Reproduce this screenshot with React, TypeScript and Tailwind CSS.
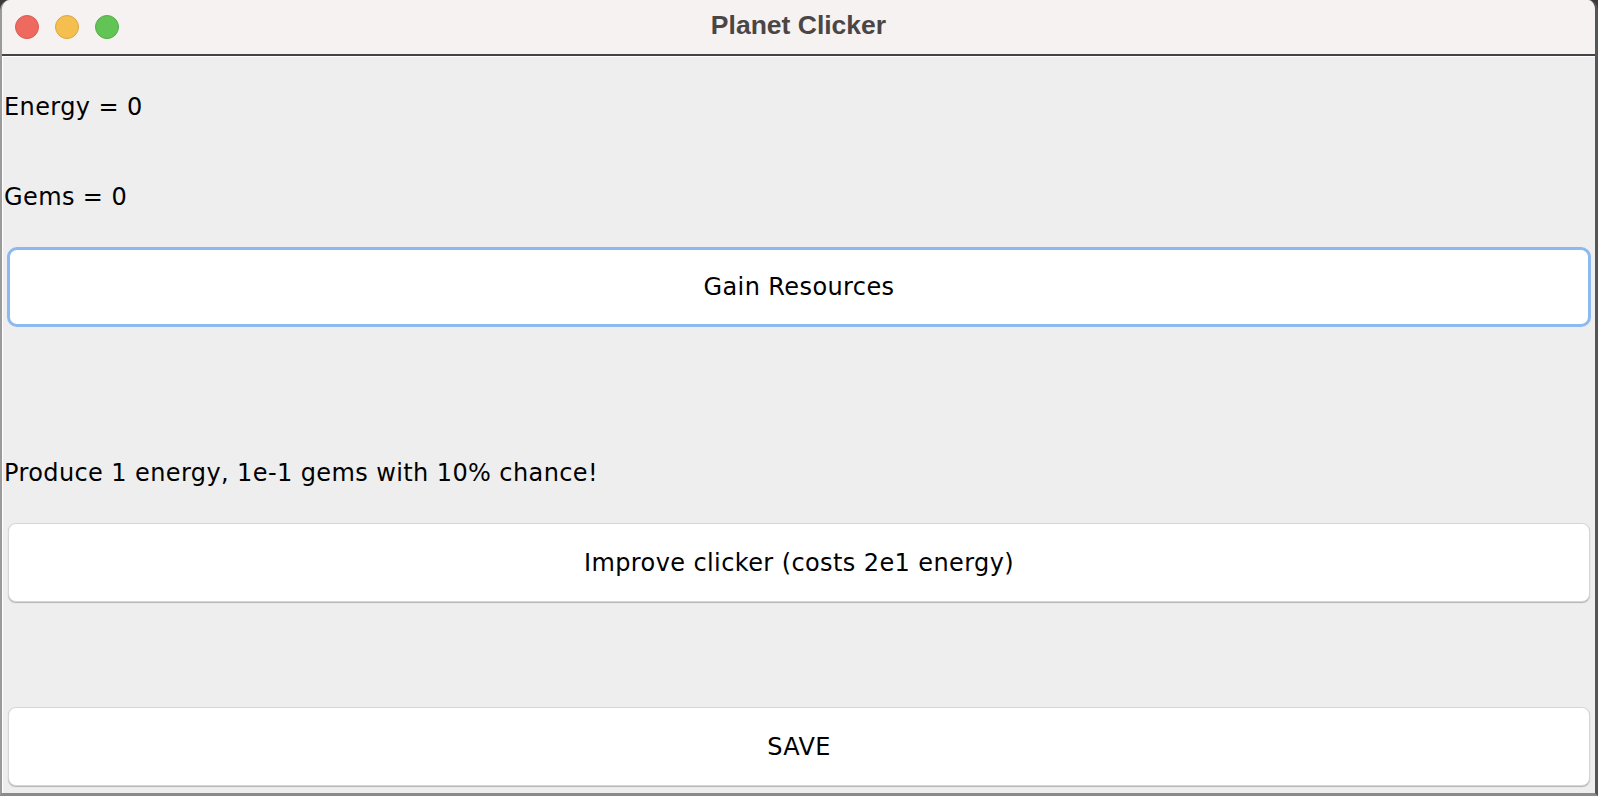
export default function App() {
  const body = "font-['DejaVu_Sans',sans-serif] text-[24px] tracking-[0.4px] leading-[30px] text-black";

  return (
    <div className="w-[1598px] h-[796px] bg-[#3a3a3a] overflow-hidden">
      <div className="flex flex-col h-full rounded-t-[10px] overflow-hidden border-l-2 border-l-[#9a9a9a] border-r-[3px] border-r-[#555] border-b-[3px] border-b-[#8a8a8a] bg-[#eeeeee]">
        {/* Title bar */}
        <div className="grid grid-cols-[1fr_auto_1fr] items-center h-[56px] shrink-0 bg-[#f7f2f2] border-b-2 border-[#444]">
          <div className="flex items-center gap-[16px] pl-[13px]">
            <span className="w-[24px] h-[24px] rounded-full bg-[#ee6a5f] border border-[#d85b51]" />
            <span className="w-[24px] h-[24px] rounded-full bg-[#f5bf4f] border border-[#dca63f]" />
            <span className="w-[24px] h-[24px] rounded-full bg-[#61c454] border border-[#52ad46]" />
          </div>
          <div className="font-['Liberation_Sans',sans-serif] font-bold text-[26.5px] text-[#4b4646] pb-[2px]">
            Planet Clicker
          </div>
          <div />
        </div>

        {/* Content */}
        <div className="flex flex-col flex-1 border-t border-white border-l border-l-white">
          <div className={`${body} mt-[35px] pl-[1px]`}>Energy = 0</div>
          <div className={`${body} mt-[60px] pl-[1px]`}>Gems = 0</div>

          <button className={`${body} mt-[35px] mx-[4px] h-[80px] rounded-[10px] bg-white border-[3px] border-[#8cb9ef]`}>
            Gain Resources
          </button>

          <div className={`${body} mt-[131px] pl-[1px]`}>Produce 1 energy, 1e-1 gems with 10% chance!</div>

          <button className={`${body} mt-[35px] mx-[5px] h-[79px] rounded-[8px] bg-white border border-[#d6d6d6] shadow-[0_1px_1px_rgba(0,0,0,0.25)]`}>
            Improve clicker (costs 2e1 energy)
          </button>

          <button className={`${body} mt-[105px] mx-[5px] h-[79px] rounded-[8px] bg-white border border-[#d6d6d6] shadow-[0_1px_1px_rgba(0,0,0,0.25)]`}>
            SAVE
          </button>
        </div>
      </div>
    </div>
  );
}
